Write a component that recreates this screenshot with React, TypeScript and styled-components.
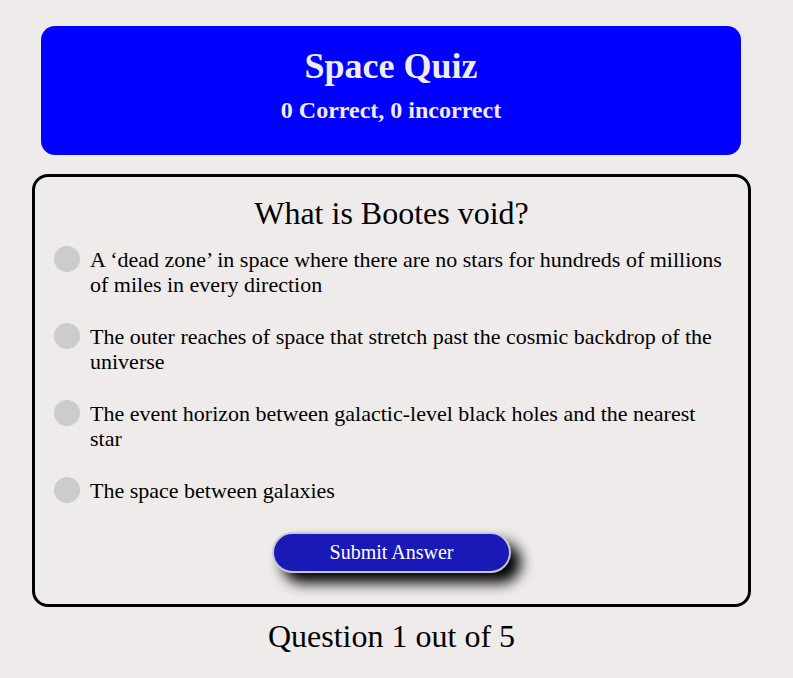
import React from "react";
import styled, { createGlobalStyle } from "styled-components";

const Global = createGlobalStyle`
  html, body { margin: 0; padding: 0; background: #efebea; }
  body { font-family: "Liberation Serif", "Times New Roman", serif; color: #000; }
`;

const Page = styled.div`
  width: 719px;
  margin-left: 32px;
  padding-top: 26px;
  display: flex;
  flex-direction: column;
  align-items: center;
`;

const Header = styled.header`
  width: 700px;
  box-sizing: border-box;
  background: #0000ff;
  border-radius: 14px;
  padding: 20px 0 31px;
  color: #f0ecec;
  text-align: center;
  margin-right: 1px;
`;

const Title = styled.h1`
  margin: 0;
  font-size: 36px;
  line-height: 41px;
  font-weight: bold;
`;

const Score = styled.h2`
  margin: 9px 0 0;
  font-size: 24px;
  line-height: 28px;
  font-weight: bold;
`;

const Card = styled.section`
  margin-top: 19px;
  width: 719px;
  box-sizing: border-box;
  border: 3px solid #000;
  border-radius: 16px;
  padding: 18px 18px 31px 18px;
  display: flex;
  flex-direction: column;
  align-items: center;
`;

const Question = styled.h3`
  margin: 0;
  font-size: 32px;
  line-height: 37px;
  font-weight: normal;
`;

const Options = styled.div`
  margin-top: 15px;
  align-self: stretch;
  display: flex;
  flex-direction: column;
  gap: 27px;
`;

const Option = styled.label`
  display: flex;
  align-items: flex-start;
  gap: 10px;
  padding-left: 1px;
  font-size: 22px;
  line-height: 25px;
  cursor: pointer;
`;

const Radio = styled.span`
  flex: none;
  width: 26px;
  height: 26px;
  border-radius: 50%;
  background: #cccccc;
  margin-top: -1px;
`;

const Submit = styled.button`
  margin-top: 29px;
  width: 239px;
  height: 41px;
  box-sizing: border-box;
  border-radius: 21px;
  border: 2px solid #c8c8d4;
  background: #1919b7;
  color: #fff;
  font-family: "Liberation Serif", "Times New Roman", serif;
  font-size: 20px;
  box-shadow: 10px 10px 14px #000;
  cursor: pointer;
`;

const Progress = styled.p`
  margin: 11px 0 0;
  font-size: 32px;
  line-height: 37px;
`;

const answers = [
  "A \u2018dead zone\u2019 in space where there are no stars for hundreds of millions of miles in every direction",
  "The outer reaches of space that stretch past the cosmic backdrop of the universe",
  "The event horizon between galactic-level black holes and the nearest star",
  "The space between galaxies",
];

export default function App() {
  return (
    <>
      <Global />
      <Page>
        <Header>
          <Title>Space Quiz</Title>
          <Score>0 Correct, 0 incorrect</Score>
        </Header>
        <Card>
          <Question>What is Bootes void?</Question>
          <Options>
            {answers.map((a) => (
              <Option key={a}>
                <Radio />
                <span>{a}</span>
              </Option>
            ))}
          </Options>
          <Submit>Submit Answer</Submit>
        </Card>
        <Progress>Question 1 out of 5</Progress>
      </Page>
    </>
  );
}
